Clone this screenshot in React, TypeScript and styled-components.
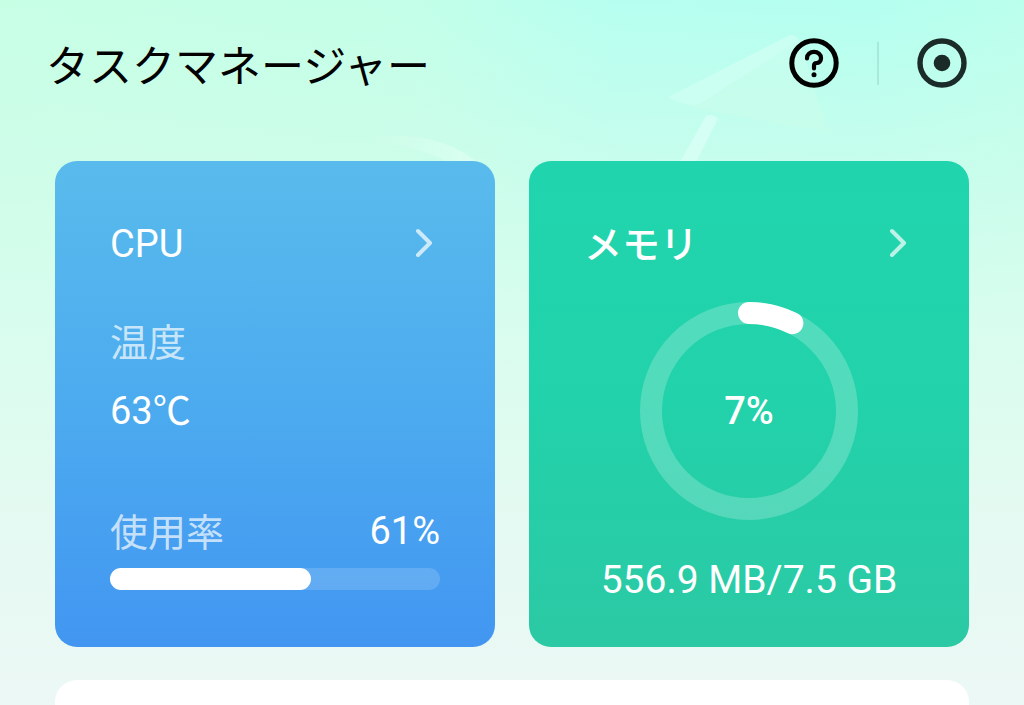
import React from "react";
import styled, { createGlobalStyle } from "styled-components";

const GlobalStyle = createGlobalStyle`
  *, *::before, *::after { box-sizing: border-box; }
  html, body { margin: 0; }
  body {
    font-family: Roboto, "Noto Sans CJK JP", sans-serif;
    background: #ebf8f4;
  }
`;

const Page = styled.div`
  position: relative;
  min-height: 100vh;
  display: flex;
  flex-direction: column;
  overflow: hidden;
  background:
    linear-gradient(180deg, rgba(210, 252, 234, 0) 0, rgba(210, 252, 234, 0.6) 160px, #d8fdee 320px, #e3faf1 500px, #ecf8f5 705px),
    linear-gradient(90deg, #c7ffe5 0%, #c3ffe8 40%, #b6fff0 60%, #b4fff0 85%, #baffec 100%);
`;

const Backdrop = styled.svg`
  position: absolute;
  top: 0;
  right: 0;
  width: 1024px;
  height: 320px;
  pointer-events: none;
`;

const Header = styled.header`
  position: relative;
  display: flex;
  align-items: center;
  justify-content: space-between;
  padding: 31px 57px 62px 46px;
`;

const Title = styled.h1`
  margin: 0;
  padding-top: 4px;
  font-size: 43px;
  line-height: 64px;
  font-weight: 400;
  color: #000;
`;

const Actions = styled.div`
  display: flex;
  align-items: center;
  align-self: flex-start;
  height: 64px;
  gap: 38px;
`;

const IconButton = styled.button`
  display: flex;
  padding: 0;
  border: 0;
  background: none;
  cursor: pointer;
`;

const Divider = styled.span`
  width: 2px;
  height: 43px;
  background: rgba(90, 150, 140, 0.2);
`;

const Content = styled.main`
  position: relative;
  flex: 1;
  display: flex;
  flex-direction: column;
  gap: 33px;
  padding: 0 55px;
`;

const Cards = styled.div`
  display: grid;
  grid-template-columns: 1fr 1fr;
  gap: 34px;
`;

const Card = styled.section<{ $from: string; $mid: string; $to: string }>`
  display: flex;
  flex-direction: column;
  padding: 54px 55px 39px;
  border-radius: 22px;
  color: #fff;
  font-size: 38px;
  line-height: 56px;
  background: linear-gradient(180deg, ${(p) => p.$from}, ${(p) => p.$mid} 50%, ${(p) => p.$to});
`;

const CardLink = styled.a`
  display: flex;
  align-items: center;
  justify-content: space-between;
  height: 56px;
  padding-right: 6px;
  color: inherit;
  text-decoration: none;
`;

const CardTitle = styled.h2<{ $strong?: boolean }>`
  margin: 0;
  padding-top: ${(p) => (p.$strong ? 4 : 2)}px;
  font-size: 38px;
  font-weight: ${(p) => (p.$strong ? 500 : 400)};
`;

const Label = styled.span`
  color: rgba(255, 255, 255, 0.7);
`;

const Reading = styled.div`
  display: flex;
  flex-direction: column;
  gap: 12px;
  margin-top: 44px;
`;

const Usage = styled.div`
  display: flex;
  flex-direction: column;
  gap: 7px;
  margin: auto 0 18px;
`;

const UsageRow = styled.div`
  display: flex;
  justify-content: space-between;
`;

const UsageValue = styled.span`
  line-height: 52px;
`;

const Track = styled.div`
  height: 22px;
  border-radius: 11px;
  background: rgba(255, 255, 255, 0.16);
`;

const Fill = styled.div`
  height: 100%;
  border-radius: 11px;
  background: #fff;
`;

const Ring = styled.div`
  display: grid;
  place-items: center;
  margin-top: 31px;

  > * {
    grid-area: 1 / 1;
  }
`;

const Percent = styled.span`
  font-weight: 500;
`;

const Amount = styled.p`
  margin: 32px 0 0;
  font-size: 39px;
  text-align: center;
  white-space: nowrap;
`;

const Panel = styled.section`
  flex: 1;
  border-radius: 22px 22px 0 0;
  background: #fff;
`;

const Chevron = () => (
  <svg width="20" height="32" viewBox="0 0 20 32" fill="none" stroke="#fff" strokeOpacity="0.7" strokeWidth="4" strokeLinecap="round" strokeLinejoin="round" aria-hidden="true">
    <path d="M4 4 L16 16 L4 28" />
  </svg>
);

const HelpIcon = () => (
  <svg width="50" height="50" viewBox="0 0 50 50" fill="none" stroke="#000" aria-hidden="true">
    <circle cx="25" cy="25" r="22.2" strokeWidth="5" />
    <path d="M18 20.4 V20 A7 6.2 0 0 1 32 20 V20.6 A4.4 4.4 0 0 1 27.6 25 Q25 25 25 27.6 V30.4" strokeWidth="4.2" strokeLinecap="round" />
    <circle cx="25" cy="36.8" r="2.5" fill="#000" stroke="none" />
  </svg>
);

const TargetIcon = () => (
  <svg width="50" height="50" viewBox="0 0 50 50" fill="none" aria-hidden="true">
    <circle cx="25" cy="25" r="22" stroke="#1b2b28" strokeWidth="5.4" />
    <circle cx="25" cy="25" r="8.3" fill="#1b2b28" />
  </svg>
);

const RING_RADIUS = 98;
const RING_LENGTH = 2 * Math.PI * RING_RADIUS;

const Gauge = ({ share }: { share: number }) => (
  <svg width="218" height="218" viewBox="0 0 218 218" fill="none" strokeWidth="22" aria-hidden="true">
    <circle cx="109" cy="109" r={RING_RADIUS} stroke="#fff" strokeOpacity="0.22" />
    <circle
      cx="109"
      cy="109"
      r={RING_RADIUS}
      stroke="#fff"
      strokeLinecap="round"
      strokeDasharray={`${share * RING_LENGTH} ${RING_LENGTH}`}
      transform="rotate(-90 109 109)"
    />
  </svg>
);

export default function App() {
  const cpuUsage = 61;
  return (
    <>
      <GlobalStyle />
      <Page>
        <Backdrop viewBox="0 0 1024 320" aria-hidden="true">
          <defs>
            <linearGradient id="roof" x1="0" y1="0" x2="0" y2="1">
              <stop offset="0" stopColor="#cdfff0" stopOpacity="0.6" />
              <stop offset="1" stopColor="#cdfbe6" stopOpacity="0.4" />
            </linearGradient>
            <linearGradient id="leaf" x1="0" y1="0" x2="1" y2="0">
              <stop offset="0" stopColor="#d8ffee" stopOpacity="0" />
              <stop offset="1" stopColor="#dcfff2" stopOpacity="0.9" />
            </linearGradient>
          </defs>
          <path d="M668 97 L788 36 Q796 33 799 40 L828 132 L715 112 Q690 108 668 97 Z" fill="url(#roof)" />
          <path d="M668 97 L788 36 Q795 34 798 41 L700 104 Q682 107 668 97 Z" fill="#ccfff4" fillOpacity="0.7" />
          <path d="M706 116 Q713 113 718 119 L696 162 H680 Z" fill="#d8fff4" fillOpacity="0.85" />
          <path d="M362 140 Q430 126 476 161 H446 Q420 147 362 140 Z" fill="url(#leaf)" />
        </Backdrop>
        <Header>
          <Title>タスクマネージャー</Title>
          <Actions>
            <IconButton type="button" aria-label="ヘルプ">
              <HelpIcon />
            </IconButton>
            <Divider />
            <IconButton type="button" aria-label="閉じる">
              <TargetIcon />
            </IconButton>
          </Actions>
        </Header>
        <Content>
          <Cards>
            <Card $from="#59bbec" $mid="#4cabef" $to="#4296f1">
              <CardLink href="#cpu">
                <CardTitle>CPU</CardTitle>
                <Chevron />
              </CardLink>
              <Reading>
                <Label>温度</Label>
                <span>63℃</span>
              </Reading>
              <Usage>
                <UsageRow>
                  <Label id="usage-label">使用率</Label>
                  <UsageValue>{cpuUsage}%</UsageValue>
                </UsageRow>
                <Track role="progressbar" aria-labelledby="usage-label" aria-valuenow={cpuUsage} aria-valuemin={0} aria-valuemax={100}>
                  <Fill style={{ width: `${cpuUsage}%` }} />
                </Track>
              </Usage>
            </Card>
            <Card $from="#20d5ae" $mid="#22d2aa" $to="#2bc9a4">
              <CardLink href="#memory">
                <CardTitle $strong>メモリ</CardTitle>
                <Chevron />
              </CardLink>
              <Ring>
                <Gauge share={0.073} />
                <Percent>7%</Percent>
              </Ring>
              <Amount>556.9 MB/7.5 GB</Amount>
            </Card>
          </Cards>
          <Panel />
        </Content>
      </Page>
    </>
  );
}
